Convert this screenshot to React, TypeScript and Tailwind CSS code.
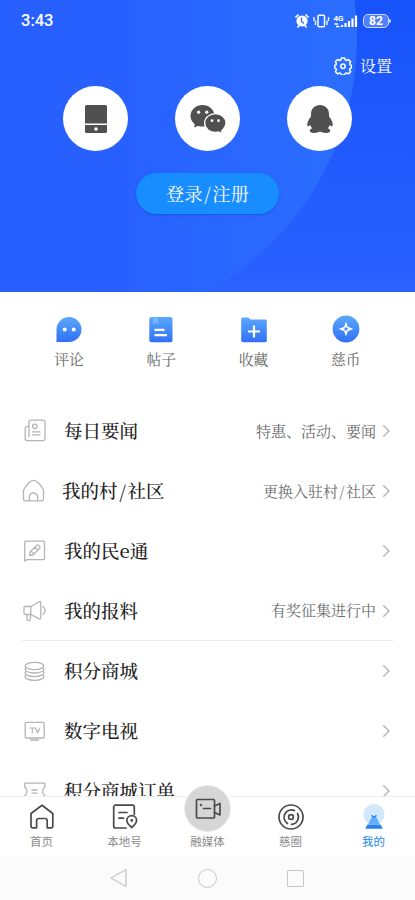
import type { ReactNode } from "react";

const gray = { fill: "none", stroke: "#b4b4b4", strokeWidth: 1.3, strokeLinejoin: "round", strokeLinecap: "round" } as const;
const dark = { fill: "none", stroke: "#4a4a4a", strokeWidth: 1.7, strokeLinejoin: "round", strokeLinecap: "round" } as const;

function RowIcon({ children }: { children: ReactNode }) {
  return (
    <svg className="size-6 shrink-0" viewBox="0 0 24 24" {...gray}>
      {children}
    </svg>
  );
}

const rows = [
  {
    title: "每日要闻",
    note: "特惠、活动、要闻",
    icon: (
      <>
        <path d="M7 17.500V3a1.800 1.800 0 0 1 1.800-1.800h12.400A1.800 1.800 0 0 1 23 3V19.800a1.800 1.800 0 0 1-1.800 1.800H5A1.800 1.800 0 0 1 3.200 19.800V9.200A1.500 1.500 0 0 1 4.700 7.700H7" />
        <circle cx="12.800" cy="7.300" r="2.200" />
        <path d="M10.500 12.800h7.500M10.500 15.800h7.500" />
      </>
    ),
  },
  {
    title: "我的村/社区",
    note: "更换入驻村/社区",
    icon: (
      <>
        <path d="M1.500 11.500C3 7.500 8 1.400 11.500 1.400S20.500 7.500 21.500 11.500V20.200A1.600 1.600 0 0 1 19.900 21.800H3.100A1.600 1.600 0 0 1 1.500 20.200Z" />
        <path d="M7.300 21.800v-3.600a4.200 4.200 0 0 1 8.400 0v3.600" />
      </>
    ),
  },
  {
    title: "我的民e通",
    note: "",
    icon: (
      <>
        <path d="M2.700 22V3.200A1 1 0 0 1 3.700 2.200H21.500A1 1 0 0 1 22.500 3.200V19.600A1 1 0 0 1 21.500 20.600H5Z" />
        <path d="m8 13 6.500-6.500a1.700 1.700 0 0 1 2.400 0l.6.6a1.700 1.700 0 0 1 0 2.400L11 16l-3.400.4ZM9 12l3 3M13 8.200l2.900 2.900" />
      </>
    ),
  },
  {
    title: "我的报料",
    note: "有奖征集进行中",
    icon: (
      <>
        <path d="M2.500 7.500h6.300l8.400-4.700A1 1 0 0 1 18.800 3.500v15.500a1 1 0 0 1-1.500.8L8.800 15.500H3.500A1.500 1.500 0 0 1 2 14V8M8.800 7.500v8M5 15.500v4.500a1.700 1.700 0 0 0 3.400 0V15.500M20.800 7.500c3 2 3 6 0 8" />
      </>
    ),
  },
  {
    title: "积分商城",
    note: "",
    icon: (
      <>
        <ellipse cx="12.500" cy="7" rx="9.300" ry="3.700" />
        <path d="M3.700 8.800c-1.200 1.500-.5 2.700 1.300 3.700 3.800 2 11.200 2 15 0 1.800-1 2.500-2.200 1.300-3.700" />
        <path d="M3.700 12.500c-1.200 1.500-.5 2.700 1.300 3.700 3.800 2 11.200 2 15 0 1.800-1 2.500-2.200 1.300-3.700" />
        <path d="M3.700 16.200c-1.200 1.500-.5 2.700 1.300 3.700 3.800 2 11.200 2 15 0 1.800-1 2.500-2.200 1.300-3.700" />
      </>
    ),
  },
  {
    title: "数字电视",
    note: "",
    icon: (
      <>
        <rect x="3.200" y="3.400" width="19" height="15.600" rx="1.300" />
        <path d="M8.500 21h8" />
        <path d="M8 9h4.600M10.300 9v4.800M13.400 9l2.200 4.800L17.800 9" strokeWidth="1.200" />
      </>
    ),
  },
  {
    title: "积分商城订单",
    note: "",
    icon: (
      <>
        <path d="M2.800 4.200h20v4.200c-3 1.500-3 6.500 0 8V21h-20v-4.600c3-1.500 3-6.500 0-8Z" />
        <path d="M10 11h5M10 14.200h5" />
      </>
    ),
  },
];

const shortcuts = [
  {
    label: "评论",
    icon: (
      <>
        <path d="M1.500 27V14.500A12.500 12.500 0 1 1 14 27Z" fill="url(#blue)" />
        <circle cx="9.700" cy="14.500" r="2" fill="#fff" />
        <circle cx="18.700" cy="14.500" r="2" fill="#fff" />
      </>
    ),
  },
  {
    label: "帖子",
    icon: (
      <>
        <rect x="2.300" y="2" width="23.200" height="25.200" rx="2" fill="url(#blue)" />
        <path d="M6 2.500h5v7L8.500 7.500 6 9.500Z" fill="#8bc4ff" opacity=".6" />
        <path d="M7.500 14.800h10M7.500 20.200h12.500" stroke="#fff" strokeWidth="2.200" />
      </>
    ),
  },
  {
    label: "收藏",
    icon: (
      <>
        <path d="M1.200 4a1.600 1.600 0 0 1 1.600-1.600h5.500L10.500 4.500h14.700a1.600 1.600 0 0 1 1.600 1.600v19.500a1.600 1.600 0 0 1-1.600 1.600H2.800a1.600 1.600 0 0 1-1.600-1.600Z" fill="url(#blue)" />
        <path d="M14 10.500v12M8 16.500h12" stroke="#fff" strokeWidth="2.200" />
      </>
    ),
  },
  {
    label: "慈币",
    icon: (
      <>
        <circle cx="14" cy="14" r="13.400" fill="url(#blue)" />
        <path fillRule="evenodd" d="m14 6.500 1.800 5.200L21.500 14l-5.700 2.200L14 21.500l-1.800-5.300L6.500 14l5.700-2.300ZM14 12.300a1.700 1.700 0 1 0 0 3.400 1.700 1.700 0 0 0 0-3.400Z" fill="#fff" />
      </>
    ),
  },
];

const tabs = [
  {
    label: "首页",
    icon: <path d="M3 10.500 14 2.300l10.800 8.200v12.600a1.700 1.700 0 0 1-1.700 1.700h-3.900v-7a2.300 2.300 0 0 0-2.300-2.300h-6a2.300 2.300 0 0 0-2.300 2.300v7H4.700A1.700 1.700 0 0 1 3 23.100Z" />,
  },
  {
    label: "本地号",
    icon: (
      <>
        <path d="M15 25H4.500a1.800 1.800 0 0 1-1.800-1.800V4a1.800 1.800 0 0 1 1.800-1.800H21.500A1.800 1.800 0 0 1 23.300 4v7.500M8 9.500h8M8 15.200h4.500" />
        <path d="M20.700 24.500c-3-2.500-4.900-4.500-4.900-7a4.900 4.900 0 0 1 9.800 0c0 2.500-1.900 4.500-4.900 7Z" />
        <circle cx="20.700" cy="17.500" r=".6" />
      </>
    ),
  },
  { label: "融媒体", icon: null },
  {
    label: "慈圈",
    icon: (
      <>
        <circle cx="14" cy="14" r="12" />
        <circle cx="14" cy="14" r="2.400" />
        <path d="M10.500 20.500A7.400 7.400 0 0 1 17.500 7.500M20.500 10.500A7.400 7.400 0 0 1 14.500 21.400" />
      </>
    ),
  },
  {
    label: "我的",
    icon: (
      <>
        <circle cx="14" cy="11.500" r="10.500" fill="url(#pale)" stroke="none" />
        <path d="M7.500 21.500h13l2.300 4.300H5.200Z" fill="#2b7fee" stroke="none" />
        <path d="M7.500 21.500c2.500-1.500 2-7.500 6.500-7.500s4 6 6.500 7.500Z" fill="#62aefa" stroke="none" />
        <path d="m12 12.800 2 1.700 2-1.700" stroke="#2583ef" strokeWidth="1.600" />
      </>
    ),
  },
];

// the slash gets a little air on both sides
function Label({ text }: { text: string }) {
  const [before, after] = text.split("/");
  if (after === undefined) return <>{text}</>;
  return (
    <>
      {before}
      <span className="mx-[0.090em]">/</span>
      {after}
    </>
  );
}

function StatusIcons() {
  return (
    <div className="flex items-center">
      <svg width="69" height="18" viewBox="0 0 69 18" fill="none" stroke="#fff">
        <circle cx="8" cy="9" r="5.600" fill="#fff" stroke="none" />
        <path d="m1.500 5.500 3-3M14.500 5.500l-3-3M3.500 15.500l1.500-2M12.500 15.500l-1.500-2" strokeWidth="1.700" />
        <path d="M7.500 5.500V9.500l2.500 2" stroke="#296aff" strokeWidth="1.300" />
        <rect x="24" y="3.200" width="6.500" height="11.600" rx="1" strokeWidth="1.500" />
        <path d="M20 5v4M21.500 8.500v4.500M34.500 5v4M33 8.500v4.500" strokeWidth="1.300" />
        <path d="M48 15v-2M51.500 15v-4M55 15V9M58.500 15V6.500M62 15V3.500" strokeWidth="2.200" />
        <path d="M40.500 12h3.500M42 14.500h3.500" strokeWidth="1.300" />
        <text x="39.500" y="9" fontSize="8" fontWeight="700" fontFamily="Roboto, sans-serif" fill="#fff" stroke="none">4G</text>
      </svg>
      <div className="flex h-[14px] w-[26px] items-center justify-center rounded-[5px] border border-[#c7d8ff] bg-white/25 font-[Roboto,sans-serif] text-[12px] font-bold leading-none">
        82
      </div>
      <div className="h-1 w-[2px] rounded-r bg-white/80" />
    </div>
  );
}

export default function App() {
  return (
    <div className="flex h-[900px] w-[415px] flex-col overflow-hidden bg-white font-['Noto_Serif_CJK_SC','Noto_Sans_CJK_SC',serif]">
      <svg className="absolute size-0">
        <defs>
          <linearGradient id="blue" x1="0" y1="0" x2="0" y2="1">
            <stop stopColor="#5aa9fb" />
            <stop offset="1" stopColor="#326ff6" />
          </linearGradient>
          <linearGradient id="pale" x1="0" y1="0" x2="0" y2="1">
            <stop stopColor="#d4e8fd" />
            <stop offset="1" stopColor="#c6e3fd" stopOpacity=".8" />
          </linearGradient>
        </defs>
      </svg>

      <header className="relative h-[292px] shrink-0 overflow-hidden bg-gradient-to-b from-[#1753fa] to-[#2a61ff] text-white">
        <div className="absolute -left-[219px] -top-[250px] size-[576px] rounded-full bg-gradient-to-r from-[#285fff] from-55% to-[#2b6eff]" />
        <div className="relative">
          <div className="flex h-[42px] items-center justify-between pl-[21px] pr-[24px]">
            <span className="font-[Roboto,sans-serif] text-[16.500px] font-medium leading-none">3:43</span>
            <StatusIcons />
          </div>
          <div className="flex h-[44px] items-center justify-end gap-2 pr-[23px] pt-1">
            <svg width="18" height="18" viewBox="0 0 18 18" fill="none" stroke="#fff" strokeWidth="1.500" strokeLinejoin="round">
              <path d="M7.400 1h3.200l.6 2 1.300.5 1.900-1 2.200 2.200-1 1.900.5 1.300 1.400.4v2.600l-1.400.6-.5 1.300 1 1.900-2.200 2.200-1.900-1-1.300.5-.6 1.600H7.400l-.6-1.600-1.300-.5-1.900 1-2.200-2.200 1-1.900-.5-1.300-1.100-.6V8.300l1.100-.4.500-1.300-1-1.900 2.200-2.200 1.900 1L6.800 3Z" />
              <circle cx="9" cy="9.300" r="2.200" />
            </svg>
            <span className="text-[16px] leading-none">设置</span>
          </div>
          <div className="flex justify-between px-[63px]">
            <div className="flex size-[65px] items-center justify-center rounded-full bg-white">
              <svg width="22" height="28" viewBox="0 0 22 28" fill="#505050">
                <path d="M0 1.500A1.500 1.500 0 0 1 1.500 0h19A1.500 1.500 0 0 1 22 1.500V18.500H0Z" />
                <path fillRule="evenodd" d="M0 20h22v6.500a1.500 1.500 0 0 1-1.500 1.500h-19A1.500 1.500 0 0 1 0 26.500Zm11 2.200a1.800 1.800 0 1 0 0 3.600 1.800 1.800 0 0 0 0-3.600Z" />
              </svg>
            </div>
            <div className="flex size-[65px] items-center justify-center rounded-full bg-white">
              <svg width="36" height="30" viewBox="0 0 36 30" fill="#505050">
                <ellipse cx="12.500" cy="11.800" rx="12" ry="10.800" />
                <path d="m5 19-.8 4.500L10 21Z" />
                <circle cx="8.600" cy="8.200" r="1.600" fill="#fff" />
                <circle cx="16.800" cy="8.200" r="1.600" fill="#fff" />
                <ellipse cx="25.300" cy="19" rx="11.300" ry="9.900" fill="#fff" />
                <ellipse cx="25.300" cy="19" rx="10" ry="8.700" />
                <path d="m27 26.500 4.500 2-.8-4Z" />
                <circle cx="22" cy="16.700" r="1.400" fill="#fff" />
                <circle cx="28.500" cy="16.700" r="1.400" fill="#fff" />
              </svg>
            </div>
            <div className="flex size-[65px] items-center justify-center rounded-full bg-white">
              <svg width="26" height="28" viewBox="0 0 26 28" fill="#505050">
                <path d="M13 0C8 0 4 3.500 4 9v2.500C1.500 14.500 0 18 .3 20.500c.2 1.700 1.500.7 2.700-.5.400 1 1.200 2.200 2.200 3.200-1.800.5-2.700 2-2.300 3.300C4 28.700 11 28.200 13 26.500c2 1.700 9 2.200 10.100 0 .4-1.300-.5-2.800-2.300-3.300 1-1 1.800-2.200 2.200-3.200 1.200 1.200 2.500 2.200 2.700.5.300-2.500-1.200-6-3.700-9V9C22 3.500 18 0 13 0Z" />
              </svg>
            </div>
          </div>
          <button className="mx-auto mt-[22px] flex h-[41px] w-[143px] items-center justify-center rounded-full bg-[#178dff] pb-[1px] text-[18.300px] leading-none shadow-[0_1px_2px_#1b55d7]">
            <Label text="登录/注册" />
          </button>
        </div>
      </header>

      <nav className="grid h-[109px] shrink-0 grid-cols-4 px-[23px] pt-[23px]">
        {shortcuts.map((s) => (
          <div key={s.label} className="flex flex-col items-center">
            <svg width="28" height="28" viewBox="0 0 28 28">
              {s.icon}
            </svg>
            <span className="mt-[7px] text-[14.800px] leading-[18px] text-[#666]">{s.label}</span>
          </div>
        ))}
      </nav>

      <main className="min-h-0 flex-1 overflow-hidden px-[22px]">
        {rows.map((r, i) => (
          <div key={r.title} className={i === 3 ? "flex h-[60px] items-center border-b border-[#ededed]" : "flex h-[60px] items-center"}>
            <RowIcon>{r.icon}</RowIcon>
            <span className={i === 1 ? "ml-[16px] text-[18.500px] font-medium text-[#222]" : "ml-[18px] text-[18.500px] font-medium text-[#222]"}>
              <Label text={r.title} />
            </span>
            <span className="ml-auto text-[15px] text-[#6c6c6c]">
              <Label text={r.note} />
            </span>
            <svg className="ml-[6px]" width="11" height="14" viewBox="0 0 11 14" fill="none" stroke="#b5b5b5" strokeWidth="1.400">
              <path d="m1.300 1.300 5.700 5.700-5.700 5.700" />
            </svg>
          </div>
        ))}
      </main>

      <footer className="relative h-[60px] shrink-0 border-t border-[#eee] bg-white">
        <div className="absolute -top-[12px] left-[184px] flex size-[47px] items-center justify-center rounded-full border border-[#ececec] bg-[#d6d6d6] ring-1 ring-white">
          <svg width="28" height="24" viewBox="0 0 28 24" {...dark}>
            <rect x="2.500" y="2.500" width="18" height="18.500" rx="1" />
            <path d="m20.500 9 5.500-2.500v11.500l-5.500-2.500M9.500 11.500h7" />
            <circle cx="7" cy="8" r=".4" />
          </svg>
        </div>
        <div className="grid h-full grid-cols-5 pt-[6px]">
          {tabs.map((t) => (
            <div key={t.label} className="flex flex-col items-center font-['Noto_Sans_CJK_SC',sans-serif]">
              <svg width="28" height="28" viewBox="0 0 28 28" {...dark}>
                {t.icon}
              </svg>
              <span className={t.label === "我的" ? "mt-[2px] text-[11.500px] leading-4 text-[#2487e8]" : "mt-[2px] text-[11.500px] leading-4 text-[#8b8b8b]"}>
                {t.label}
              </span>
            </div>
          ))}
        </div>
      </footer>

      <div className="flex h-[44px] shrink-0 items-center justify-between bg-[#fbfbfb] pl-[109px] pr-[111px]">
        <svg width="19" height="20" viewBox="0 0 19 20" fill="none" stroke="#c8c8c8" strokeWidth="1.400" strokeLinejoin="round">
          <path d="M17 1.500v17L2 10Z" />
        </svg>
        <div className="size-[19px] rounded-full border-[1.500px] border-[#c8c8c8]" />
        <div className="size-[17px] rounded-[1px] border-[1.500px] border-[#c8c8c8]" />
      </div>
    </div>
  );
}
